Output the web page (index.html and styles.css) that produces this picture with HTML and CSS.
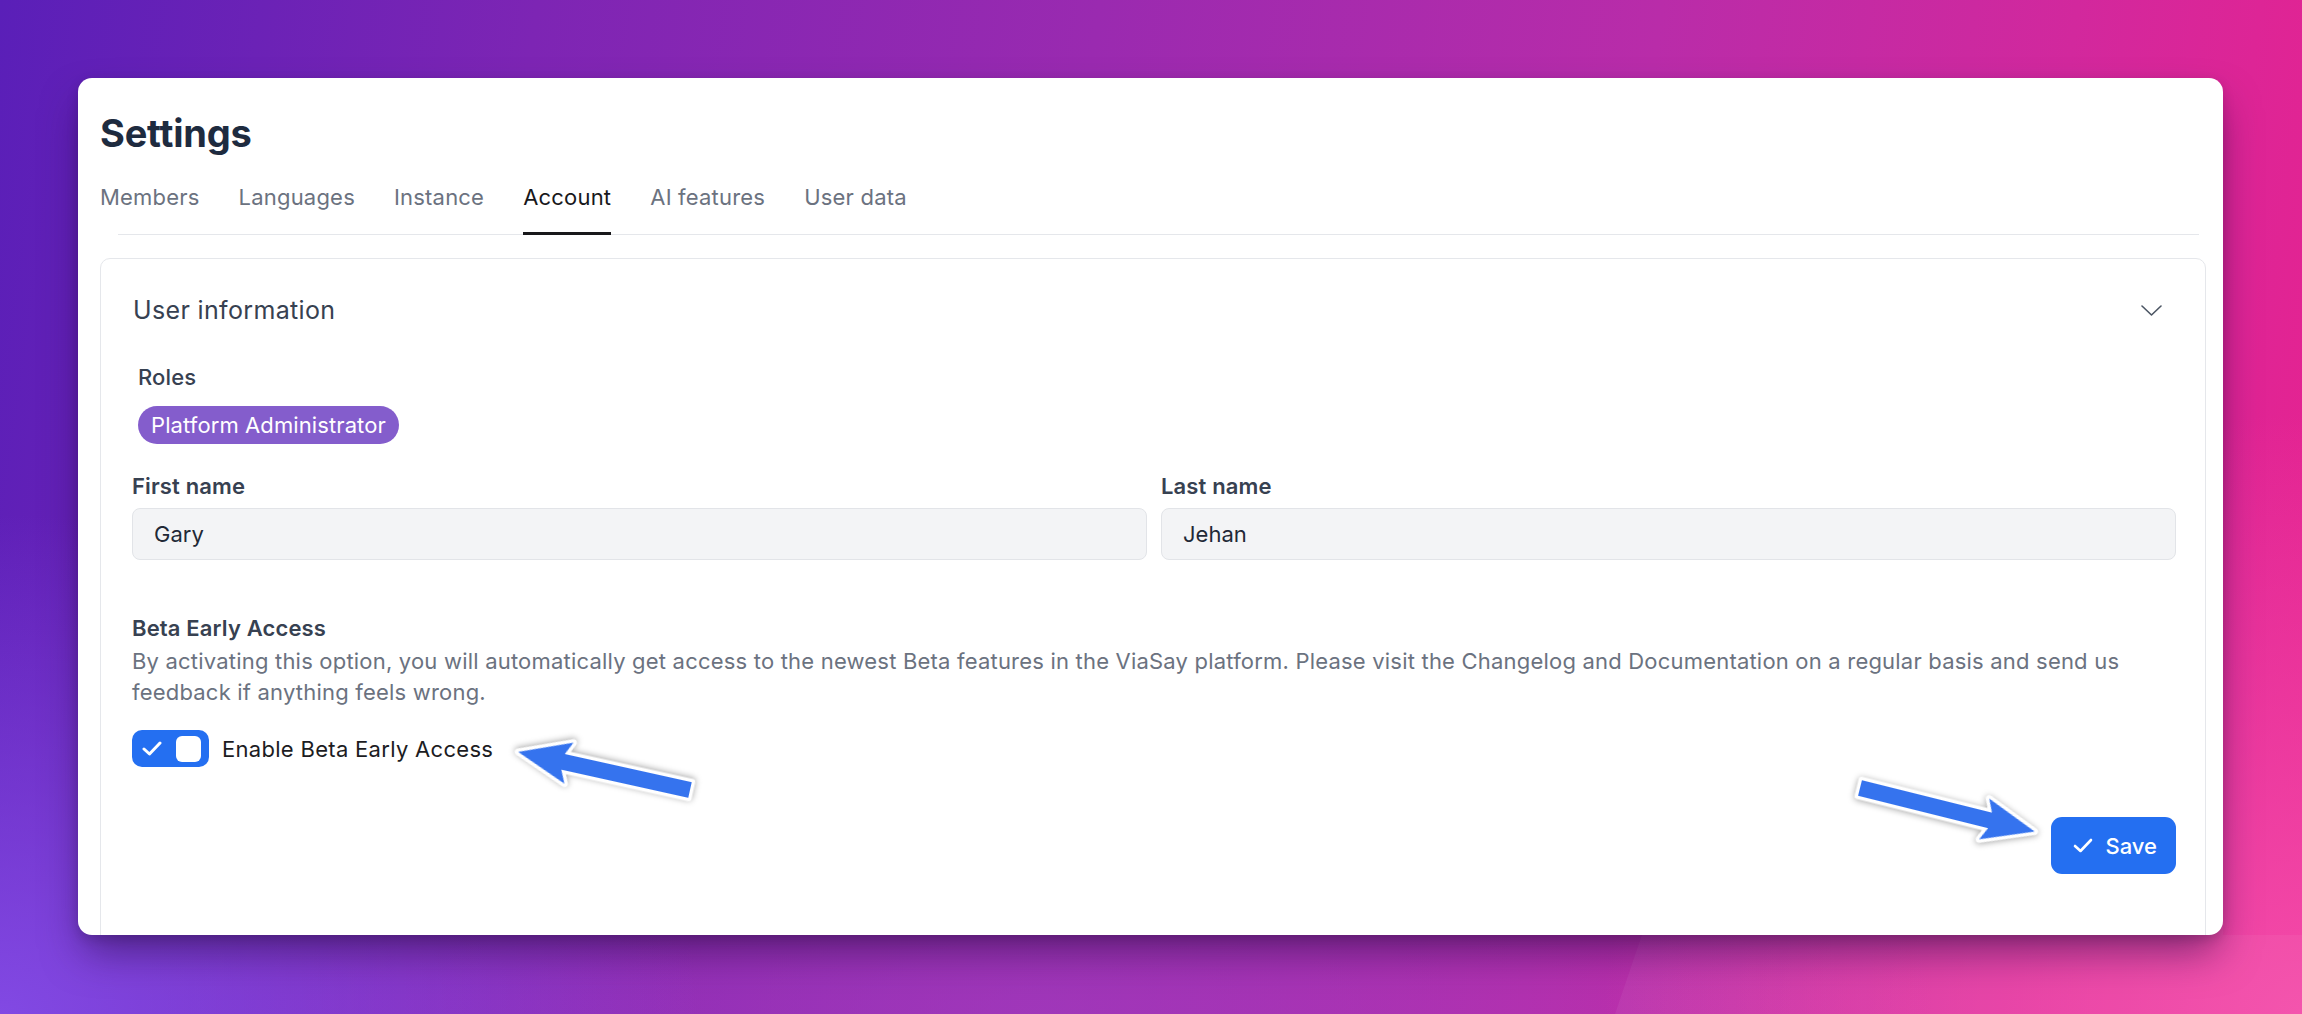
FILE: index.html
```html
<!DOCTYPE html>
<html lang="en">
<head>
<meta charset="utf-8">
<title>Settings</title>
<link rel="stylesheet" href="styles.css">
</head>
<body>
<div class="wedge"></div>
<main class="card">
  <h1 class="title">Settings</h1>
  <nav class="tabs">
    <a class="tab">Members</a>
    <a class="tab">Languages</a>
    <a class="tab">Instance</a>
    <a class="tab active">Account</a>
    <a class="tab">AI features</a>
    <a class="tab">User data</a>
  </nav>
  <div class="divider"></div>
  <section class="panel">
    <header class="panel-head">
      <h2 class="panel-title">User information</h2>
      <svg class="chevron" width="21" height="11" viewBox="0 0 21 11"><polyline points="1,1 10.5,10 20,1" fill="none" stroke="#4b5563" stroke-width="1.6" stroke-linecap="round" stroke-linejoin="round"/></svg>
    </header>
    <div class="panel-body">
      <div class="roles">
        <div class="field-label">Roles</div>
        <span class="badge">Platform Administrator</span>
      </div>
      <div class="name-grid">
        <div class="field">
          <div class="field-label strong">First name</div>
          <div class="input">Gary</div>
        </div>
        <div class="field">
          <div class="field-label strong">Last name</div>
          <div class="input">Jehan</div>
        </div>
      </div>
      <div class="beta">
        <h3 class="beta-title">Beta Early Access</h3>
        <p class="beta-desc">By activating this option, you will automatically get access to the newest Beta features in the ViaSay platform. Please visit the Changelog and Documentation on a regular basis and send us feedback if anything feels wrong.</p>
        <div class="toggle-row">
          <span class="toggle">
            <svg class="toggle-check" width="20" height="15" viewBox="0 0 20 15"><polyline points="2,8 7.5,13 18,2" fill="none" stroke="#fff" stroke-width="3" stroke-linecap="round" stroke-linejoin="round"/></svg>
            <span class="knob"></span>
          </span>
          <span class="toggle-label">Enable Beta Early Access</span>
        </div>
      </div>
      <div class="actions">
        <button class="save">
          <svg width="20" height="15" viewBox="0 0 20 15"><polyline points="2,8 7.5,13 18,2" fill="none" stroke="#fff" stroke-width="2.6" stroke-linecap="round" stroke-linejoin="round"/></svg>
          <span>Save</span>
        </button>
      </div>
    </div>
  </section>
</main>
<svg class="annotations" width="2302" height="1014" viewBox="0 0 2302 1014">
  <polygon class="arrow" transform="translate(690 790) rotate(192.5)" points="0,-8 130,-8 124,-21 176,0 124,21 130,8 0,8"/>
  <polygon class="arrow" transform="translate(1860 788) rotate(14)" points="0,-8 134,-8 128,-21 180,0 128,21 134,8 0,8"/>
</svg>
</body>
</html>
```
FILE: styles.css
```css
* { box-sizing: border-box; }
html, body { margin: 0; padding: 0; }
body {
  position: relative;
  width: 2302px;
  height: 1014px;
  overflow: hidden;
  font-family: Inter, "Noto Sans", "Liberation Sans", sans-serif;
  background:
    radial-gradient(ellipse 700px 500px at 0% 100%, rgba(135, 80, 235, 0.85), rgba(135, 80, 235, 0) 100%),
    radial-gradient(ellipse 700px 600px at 100% 100%, rgba(245, 80, 172, 0.9), rgba(245, 80, 172, 0) 100%),
    radial-gradient(ellipse 900px 400px at 45% 100%, rgba(160, 60, 190, 0.7), rgba(160, 60, 190, 0) 100%),
    linear-gradient(98deg, #5a1fb8 0%, #7d25b4 22%, #9a2ab0 45%, #b92ca9 68%, #d2289d 85%, #e8228f 100%);
}
.wedge {
  position: absolute;
  inset: 0;
  background: rgba(255, 255, 255, 0.05);
  clip-path: polygon(1722px 700px, 2223px 700px, 2223px 935px, 2302px 935px, 2302px 1014px, 1615px 1014px);
}
.card {
  position: relative;
  margin: 78px 0 0 78px;
  width: 2145px;
  height: 857px;
  background: #fff;
  border-radius: 14px;
  overflow: hidden;
  padding: 32px 17px 0 22px;
  box-shadow: 0 22px 40px -6px rgba(40, 10, 70, 0.55), 0 4px 12px rgba(0, 0, 0, 0.15);
}
.title {
  margin: 0;
  font-size: 38px;
  line-height: 46px;
  font-weight: 700;
  color: #1e2b3f;
  letter-spacing: -0.2px;
}
.tabs {
  position: relative;
  z-index: 1;
  display: flex;
  gap: 39px;
  margin-top: 26px;
}
.tab {
  font-size: 22px;
  line-height: 30px;
  letter-spacing: 0.2px;
  color: #6b7280;
  padding-bottom: 20px;
  border-bottom: 3px solid transparent;
}
.tab.active {
  color: #18181b;
  border-bottom-color: #18181b;
}
.divider {
  height: 1px;
  background: #e5e7eb;
  margin: -1px 7px 0 18px;
}
.panel {
  margin-top: 23px;
  border: 1px solid #e5e7eb;
  border-radius: 10px;
  padding-bottom: 120px;
}
.panel-head {
  display: flex;
  align-items: center;
  justify-content: space-between;
  padding: 35px 43px 0 32px;
}
.panel-title {
  margin: 0;
  font-size: 25px;
  line-height: 32px;
  font-weight: 400;
  letter-spacing: 0.35px;
  color: #374151;
}
.chevron { display: block; }
.panel-body {
  padding: 37px 29px 0 31px;
}
.roles { padding-left: 6px; }
.field-label {
  font-size: 22px;
  line-height: 28px;
  font-weight: 500;
  letter-spacing: 0.15px;
  color: #374151;
}
.field-label.strong { font-weight: 600; }
.badge {
  display: inline-block;
  margin-top: 15px;
  height: 38px;
  line-height: 38px;
  padding: 0 13px;
  border-radius: 19px;
  background: #845dcc;
  color: #fff;
  font-size: 22px;
  letter-spacing: 0.1px;
}
.name-grid {
  display: grid;
  grid-template-columns: 1fr 1fr;
  gap: 14px;
  margin-top: 28px;
}
.input {
  margin-top: 8px;
  height: 52px;
  display: flex;
  align-items: center;
  padding: 0 21px;
  background: #f3f4f6;
  border: 1px solid #e2e4e8;
  border-radius: 8px;
  font-size: 22px;
  color: #1f2937;
}
.beta { margin-top: 54px; }
.beta-title {
  margin: 0;
  font-size: 22px;
  line-height: 28px;
  font-weight: 600;
  letter-spacing: 0.15px;
  color: #374151;
}
.beta-desc {
  margin: 4px 0 0;
  font-size: 22px;
  line-height: 31px;
  letter-spacing: 0.2px;
  color: #6b7280;
}
.toggle-row {
  display: flex;
  align-items: center;
  gap: 13px;
  margin-top: 22px;
}
.toggle {
  width: 77px;
  height: 37px;
  border-radius: 10px;
  background: #246ff1;
  display: flex;
  align-items: center;
  justify-content: space-between;
  padding: 0 8px 0 10px;
}
.toggle-check { display: block; }
.knob {
  width: 25px;
  height: 26px;
  border-radius: 6px;
  background: #fff;
}
.toggle-label {
  font-size: 22px;
  letter-spacing: 0.3px;
  color: #1c1c22;
}
.actions {
  display: flex;
  justify-content: flex-end;
  margin-top: 50px;
}
.save {
  display: flex;
  align-items: center;
  gap: 12px;
  height: 57px;
  padding: 0 19px 0 22px;
  border: 0;
  border-radius: 11px;
  background: #246ff1;
  color: #fff;
  font-family: inherit;
  font-size: 22px;
  font-weight: 500;
}
.save svg { display: block; }
.annotations {
  position: absolute;
  top: 0;
  left: 0;
  pointer-events: none;
}
.arrow {
  fill: #3573ee;
  stroke: #fff;
  stroke-width: 7;
  stroke-linejoin: round;
  paint-order: stroke;
  filter: drop-shadow(0 1px 3px rgba(0, 0, 0, 0.35));
}
```
